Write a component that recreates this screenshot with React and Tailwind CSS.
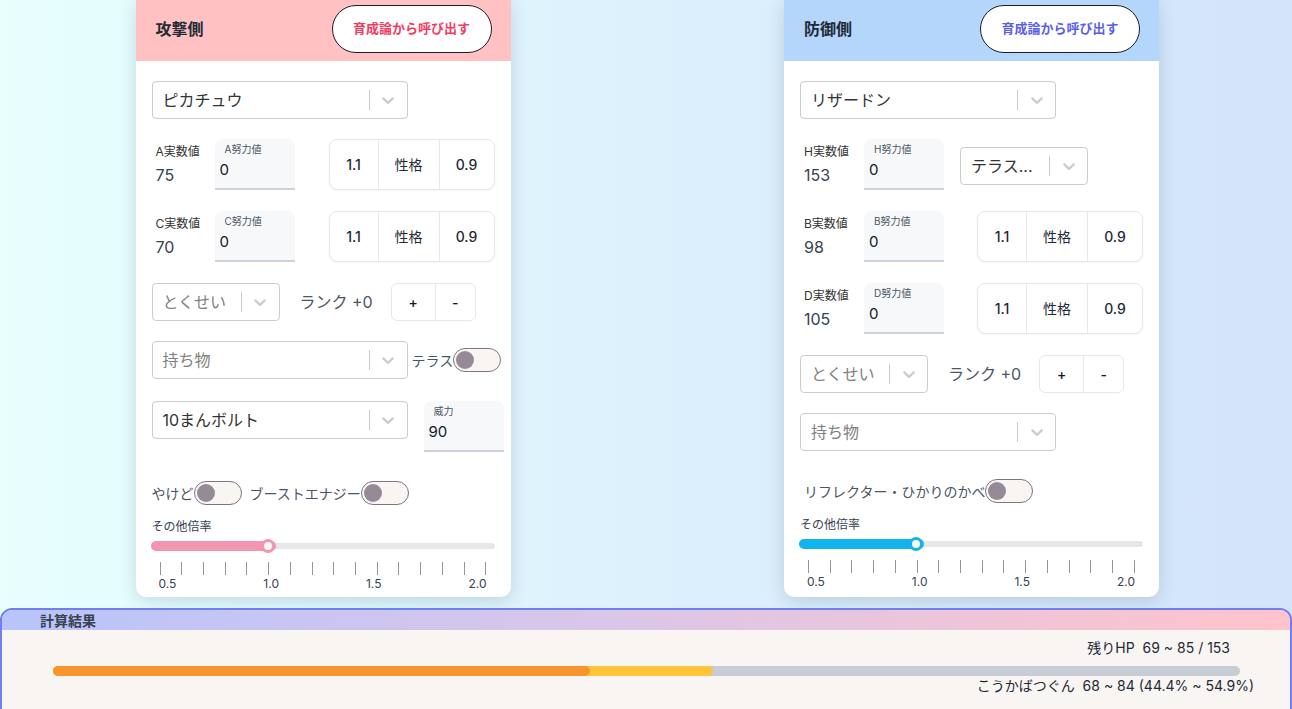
import React from 'react';

const Chevron = () => (
  <svg width="20" height="20" viewBox="0 0 20 20" fill="#cccccc">
    <path d="M4.516 7.548c0.436-0.446 1.043-0.481 1.576 0l3.908 3.747 3.908-3.747c0.533-0.481 1.141-0.446 1.574 0 0.436 0.445 0.408 1.197 0 1.615-0.406 0.418-4.695 4.502-4.695 4.502-0.217 0.223-0.502 0.335-0.787 0.335s-0.57-0.112-0.789-0.335c0 0-4.287-4.084-4.695-4.502s-0.436-1.17 0-1.615z" />
  </svg>
);

// react-select lookalike
const Select = ({ value, placeholder, wide }) => (
  <div className={`${wide ? 'w-[256px]' : 'w-[128px]'} h-[38px] shrink-0 flex items-center bg-white border border-[#cccccc] rounded-[4px]`}>
    <div className={`flex-1 pl-[10px] text-[16px] whitespace-nowrap overflow-hidden ${value ? 'text-[#333333]' : 'text-[#808080]'}`}>
      {value || placeholder}
    </div>
    <div className="w-px h-[20px] bg-[#cccccc]" />
    <div className="w-[37px] flex justify-center">
      <Chevron />
    </div>
  </div>
);

const FilledInput = ({ label, value, className = '' }) => (
  <div className={`w-[80px] h-[51px] shrink-0 bg-[#f7f8fa] rounded-t-[8px] border-b-2 border-[#cdd1d8] flex flex-col ${className}`}>
    <div className="pl-[10px] pt-[3px] text-[10px] leading-[14px] text-[#4b5563]">{label}</div>
    <div className="pl-[5px] mt-[4px] text-[15px] leading-[20px] text-[#111827]">{value}</div>
  </div>
);

const NatureGroup = () => (
  <div className="h-[51px] flex border border-[#e5e7eb] rounded-[8px] text-[14px] text-[#1f2937] shadow-[0_1px_2px_rgba(0,0,0,0.04)]">
    <div className="w-[48px] flex items-center justify-center font-medium">1.1</div>
    <div className="w-[61px] flex items-center justify-center border-l border-[#e5e7eb]">性格</div>
    <div className="w-[55px] flex items-center justify-center border-l border-[#e5e7eb] font-medium">0.9</div>
  </div>
);

const StatRow = ({ stat, value, className = '', children }) => (
  <div className={`flex items-center h-[51px] ${className}`}>
    <div className="w-[64px] pl-1 flex flex-col gap-[5px]">
      <div className="text-[12px] leading-[16px] text-[#333333]">{stat}実数値</div>
      <div className="text-[16px] leading-[20px] text-[#374151]">{value}</div>
    </div>
    <FilledInput label={`${stat}努力値`} value="0" />
    {children}
  </div>
);

const RankRow = ({ className = '' }) => (
  <div className={`flex items-center ${className}`}>
    <Select placeholder="とくせい" />
    <div className="ml-5 text-[16px] text-[#4b5563] whitespace-nowrap">ランク +0</div>
    <div className="ml-[18px] h-[38px] flex border border-[#e5e7eb] rounded-[6px] text-[14px] font-medium text-[#111827]">
      <div className="w-[43px] flex items-center justify-center">+</div>
      <div className="w-[40px] flex items-center justify-center border-l border-[#e5e7eb]">-</div>
    </div>
  </div>
);

const Toggle = () => (
  <div className="w-[48px] h-[24px] shrink-0 rounded-full border border-[#7d7580] bg-[#f9f5f2] flex items-center px-[2px]">
    <div className="w-[18px] h-[18px] rounded-full bg-[#958a96]" />
  </div>
);

const RateSlider = ({ color, top }) => (
  <div>
    <div className={`${top} text-[12px] leading-[16px] text-[#374151]`}>その他倍率</div>
    <div className="relative h-[14px] ml-[-1px] mt-[4px] flex items-center">
      <div className="w-full h-[6px] rounded-full bg-[#e8e6e9]" />
      <div className={`absolute left-0 w-[125px] h-[10px] rounded-full ${color.bg}`} />
      <div className={`absolute left-[110px] w-[14px] h-[14px] rounded-full bg-[#faf6f3] border-[3px] ${color.border}`} />
    </div>
    <div className="mx-2 mt-[9px] h-[13px] flex justify-between">
      {Array.from({ length: 16 }).map((_, i) => (
        <div key={i} className="w-px h-full bg-[#8e96a4]" />
      ))}
    </div>
    <div className="ml-[7px] mr-2 mt-px flex justify-between text-[12px] leading-[16px] text-[#374151]">
      <span>0.5</span>
      <span>1.0</span>
      <span>1.5</span>
      <span>2.0</span>
    </div>
  </div>
);

const CardHeader = ({ title, bg, btn }) => (
  <div className={`h-[61px] flex items-center justify-between pl-5 pr-[19px] pb-[3px] ${bg}`}>
    <div className="text-[16px] font-bold text-[#1f2937]">{title}</div>
    <div className={`w-[160px] h-[48px] rounded-full bg-white border-[1.5px] border-[#1e1b2e] flex items-center justify-center text-[13px] font-bold ${btn}`}>
      育成論から呼び出す
    </div>
  </div>
);

const AttackCard = () => (
  <div className="w-[375px] h-[597px] bg-white rounded-b-[10px] shadow-[0_4px_18px_rgba(40,70,90,0.18)]">
    <CardHeader title="攻撃側" bg="bg-[#ffc1c1]" btn="text-[#f23b5f]" />
    <div className="px-4 pt-5">
      <Select value="ピカチュウ" wide />
      <StatRow stat="A" value="75" className="mt-5">
        <div className="ml-[34px]"><NatureGroup /></div>
      </StatRow>
      <StatRow stat="C" value="70" className="mt-[21px]">
        <div className="ml-[34px]"><NatureGroup /></div>
      </StatRow>
      <RankRow className="mt-[21px]" />
      <div className="mt-5 flex items-center whitespace-nowrap">
        <Select placeholder="持ち物" wide />
        <span className="ml-1 shrink-0 text-[14px] text-[#4b5563]">テラス</span>
        <Toggle />
      </div>
      <div className="mt-[22px] flex items-start">
        <Select value="10まんボルト" wide />
        <FilledInput label="威力" value="90" className="ml-4" />
      </div>
      <div className="mt-[29px] flex items-center text-[14px] text-[#4b5563] whitespace-nowrap">
        <span>やけど</span>
        <Toggle />
        <span className="ml-2">ブーストエナジー</span>
        <Toggle />
      </div>
      <RateSlider color={{ bg: 'bg-[#f295b0]', border: 'border-[#f295b0]' }} top="mt-[14px]" />
    </div>
  </div>
);

const DefenseCard = () => (
  <div className="w-[375px] h-[597px] bg-white rounded-b-[10px] shadow-[0_4px_18px_rgba(40,70,90,0.18)]">
    <CardHeader title="防御側" bg="bg-[#b3d6fa]" btn="text-[#5a5fe6]" />
    <div className="px-4 pt-5">
      <Select value="リザードン" wide />
      <StatRow stat="H" value="153" className="mt-5">
        <div className="ml-4 mt-[3px]"><Select value="テラス..." /></div>
      </StatRow>
      <StatRow stat="B" value="98" className="mt-[21px]">
        <div className="ml-[33px]"><NatureGroup /></div>
      </StatRow>
      <StatRow stat="D" value="105" className="mt-[21px]">
        <div className="ml-[33px]"><NatureGroup /></div>
      </StatRow>
      <RankRow className="mt-[21px]" />
      <div className="mt-5">
        <Select placeholder="持ち物" wide />
      </div>
      <div className="mt-[28px] pl-1 flex items-center text-[14px] text-[#4b5563] whitespace-nowrap">
        <span>リフレクター・ひかりのかべ</span>
        <Toggle />
      </div>
      <RateSlider color={{ bg: 'bg-[#12b4ef]', border: 'border-[#12b4ef]' }} top="mt-[14px]" />
    </div>
  </div>
);

export default function App() {
  return (
    <div className="w-full h-[709px] overflow-hidden flex flex-col bg-linear-to-r from-[#e8fffe] via-[#dcf1fc] to-[#d3e4fb] font-['Inter','Noto_Sans_CJK_JP',sans-serif]">
      <div className="grid grid-cols-2">
        <div className="flex justify-center">
          <AttackCard />
        </div>
        <div className="flex justify-center pl-[5px]">
          <DefenseCard />
        </div>
      </div>

      <div className="mt-[11px] h-[130px] shrink-0 border-2 border-[#707ff0] rounded-t-[12px] overflow-hidden bg-[#f9f5f2]">
        <div className="h-[20px] pl-[38px] flex items-center bg-linear-to-r from-[#b8c4fb] via-[#dcc6e6] to-[#ffc3cb] text-[14px] font-bold text-[#374151]">
          計算結果
        </div>
        <div className="pt-[8px] pr-[60px] text-right text-[14px] leading-[20px] text-[#1f2937] whitespace-pre">
          残りHP  69 ~ 85 / 153
        </div>
        <div className="relative mt-[8px] ml-[51px] mr-[50px] h-[10px] rounded-full bg-[#c8ccd4]">
          <div className="absolute left-0 top-0 h-full w-[55.6%] rounded-full bg-[#ffc43a]" />
          <div className="absolute left-0 top-0 h-full w-[45.2%] rounded-full bg-[#f7952c]" />
        </div>
        <div className="pr-[36px] text-right text-[14px] leading-[20px] text-[#1f2937] whitespace-pre">
          こうかばつぐん  68 ~ 84 (44.4% ~ 54.9%)
        </div>
      </div>
    </div>
  );
}
